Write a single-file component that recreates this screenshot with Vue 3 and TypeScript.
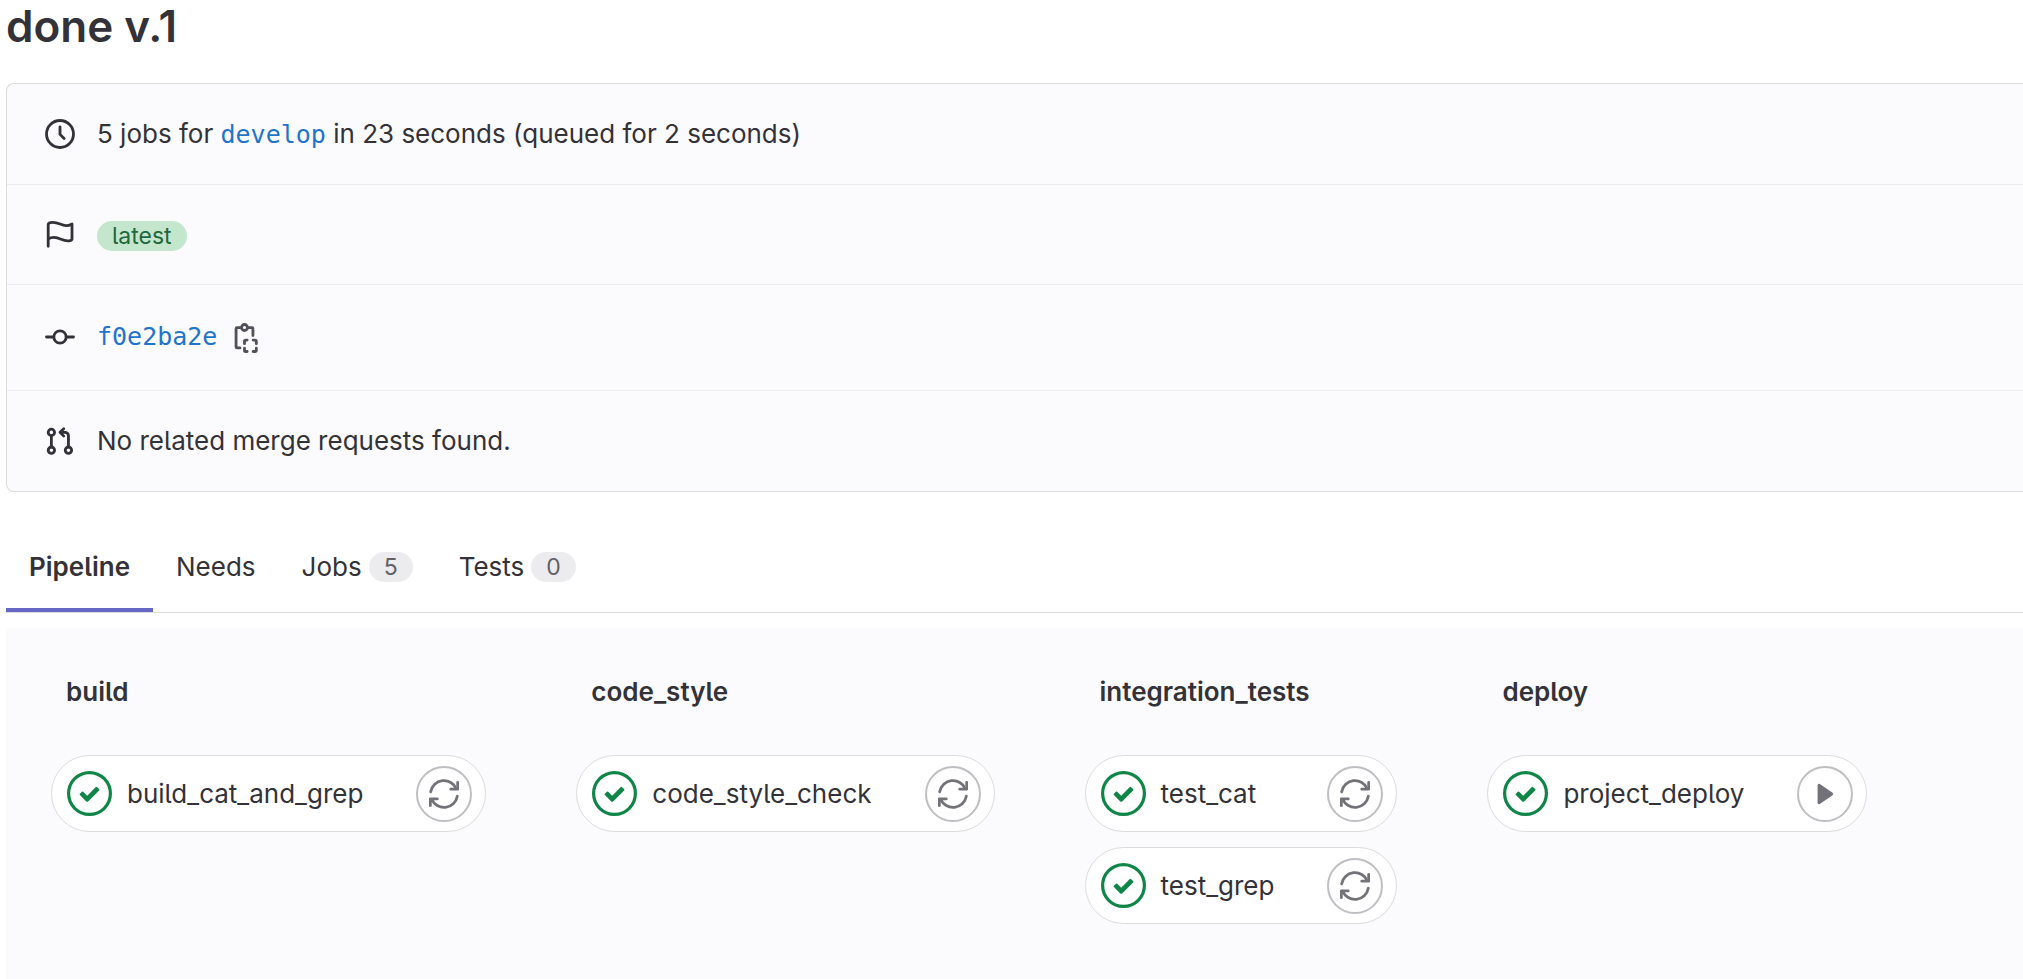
<script setup lang="ts">
type Action = 'retry' | 'play'

interface Job {
  name: string
  action: Action
}

interface Stage {
  name: string
  jobs: Job[]
}

interface Tab {
  label: string
  count?: number
}

const tabs: Tab[] = [
  { label: 'Pipeline' },
  { label: 'Needs' },
  { label: 'Jobs', count: 5 },
  { label: 'Tests', count: 0 },
]
const activeTab = 'Pipeline'

const stages: Stage[] = [
  { name: 'build', jobs: [{ name: 'build_cat_and_grep', action: 'retry' }] },
  { name: 'code_style', jobs: [{ name: 'code_style_check', action: 'retry' }] },
  {
    name: 'integration_tests',
    jobs: [
      { name: 'test_cat', action: 'retry' },
      { name: 'test_grep', action: 'retry' },
    ],
  },
  { name: 'deploy', jobs: [{ name: 'project_deploy', action: 'play' }] },
]
</script>

<template>
  <main class="page">
    <h1 class="title">done v.1</h1>

    <section class="info">
      <div class="row">
        <svg class="icon" viewBox="0 0 16 16" aria-hidden="true">
          <circle cx="8" cy="8" r="7.2" />
          <path d="M8 4.2v4l2.2 2.2" />
        </svg>
        <p class="text">
          5 jobs for <a class="mono" href="#develop">develop</a> in 23 seconds (queued for 2 seconds)
        </p>
      </div>
      <div class="row">
        <svg class="icon" viewBox="0 0 16 16" aria-hidden="true">
          <path d="M1.7 14V2.6Q1.7 1.7 2.9 1.4C6.6.6 8.4 3 11.2 3Q12.7 3 14.4 2.1V10Q14.4 10.8 13.5 11C9.6 11.9 8.4 9.3 4.8 9.3Q3.1 9.3 1.7 10.1" />
        </svg>
        <span class="badge success">latest</span>
      </div>
      <div class="row commit">
        <svg class="icon" viewBox="0 0 16 16" aria-hidden="true">
          <circle cx="8" cy="8" r="3.3" />
          <path d="M.8 8h3.9M11.3 8h3.9" />
        </svg>
        <a class="mono" href="#f0e2ba2e">f0e2ba2e</a>
        <button class="copy" type="button" aria-label="Copy commit SHA">
          <svg class="icon" viewBox="0 0 16 16" aria-hidden="true">
            <path d="M5.4 2.5H3.2a.5.5 0 0 0-.5.5v9.8a.5.5 0 0 0 .5.5h1.6M9.2 2.5h2a.5.5 0 0 1 .5.5v3.7" />
            <circle cx="7.2" cy="2.4" r="1.6" />
            <path d="M7.2 11v-1.3a.6.6 0 0 1 .6-.6H8.6M11.8 9.1h1.1a.6.6 0 0 1 .6.6V11M13.5 13.4v1.2a.6.6 0 0 1-.6.6h-1.1M8.6 15.2h-.8a.6.6 0 0 1-.6-.6v-1.2" />
          </svg>
        </button>
      </div>
      <div class="row">
        <svg class="icon" viewBox="0 0 16 16" aria-hidden="true">
          <circle cx="3.4" cy="3.4" r="1.7" />
          <circle cx="3.4" cy="12.9" r="1.7" />
          <circle cx="12.5" cy="12.9" r="1.7" />
          <path d="M3.4 5.2v6M12.5 11.1V5.2a1.8 1.8 0 0 0-1.8-1.8H8.2M10 1.5 8 3.4l2 2" />
        </svg>
        <p class="text">No related merge requests found.</p>
      </div>
    </section>

    <div class="tabs" role="tablist">
      <button
        v-for="tab in tabs"
        :key="tab.label"
        class="tab"
        :class="{ active: tab.label === activeTab }"
        type="button"
        role="tab"
        :aria-selected="tab.label === activeTab"
      >
        <span>{{ tab.label }}</span>
        <span v-if="tab.count !== undefined" class="badge muted">{{ tab.count }}</span>
      </button>
    </div>

    <section class="graph">
      <div v-for="stage in stages" :key="stage.name" class="stage">
        <h2 class="stage-name">{{ stage.name }}</h2>
        <ul class="jobs">
          <li v-for="job in stage.jobs" :key="job.name" class="job">
            <svg class="status" viewBox="0 0 14 14" aria-hidden="true">
              <circle cx="7" cy="7" r="6.5" />
              <path d="M6.278 7.697L5.045 6.464a.296.296 0 0 0-.42-.002l-.613.614a.298.298 0 0 0 .002.42l1.91 1.909a.5.5 0 0 0 .703.005l.265-.265L9.997 6.04a.291.291 0 0 0-.009-.408l-.614-.614a.29.29 0 0 0-.408-.009L6.278 7.697z" />
            </svg>
            <span class="job-name">{{ job.name }}</span>
            <button class="action" type="button" :aria-label="`${job.action} ${job.name}`">
              <svg v-if="job.action === 'retry'" class="icon" viewBox="0 0 16 16" aria-hidden="true">
                <path d="M.9 6.8A7.2 7.2 0 0 1 14.6 5.2M15.3 1.8v3.6h-3.7" />
                <path d="M15.1 9.2A7.2 7.2 0 0 1 1.4 10.8M.7 14.2v-3.6h3.7" />
              </svg>
              <svg v-else class="icon play" viewBox="0 0 16 16" aria-hidden="true">
                <path d="M4.8 3.3v9.4L11.6 8z" />
              </svg>
            </button>
          </li>
        </ul>
      </div>
    </section>
  </main>
</template>

<style>
body {
  background: #fff;
}
</style>

<style scoped>
.page {
  padding-left: 6px;
  overflow: hidden;
  color: #333238;
  font-family: Inter, "Noto Sans", sans-serif;
  font-size: 26px;
  font-weight: 400;
  font-feature-settings: "cv05";
  line-height: 36px;
}

.title {
  margin: 0 0 31px;
  font-size: 44px;
  line-height: 52px;
  font-weight: 600;
}

.info {
  border: 1px solid #dcdcde;
  border-right: 0;
  border-radius: 8px 0 0 8px;
  background: #fbfafd;
}

.row {
  box-sizing: border-box;
  display: flex;
  align-items: center;
  min-height: 100px;
  padding-left: 38px;
  gap: 22px;
}

.row + .row {
  border-top: 1px solid #ececef;
}

.row.commit {
  min-height: 106px;
  padding-bottom: 2px;
}

.row:last-child {
  min-height: 101px;
}

.text {
  margin: 0;
}

.icon {
  flex: none;
  display: block;
  width: 30px;
  height: 30px;
  fill: none;
  stroke: currentColor;
  stroke-width: 1.5;
  stroke-linecap: round;
  stroke-linejoin: round;
}

.mono {
  color: #1f75cb;
  font-family: "DejaVu Sans Mono", monospace;
  font-size: 25px;
  text-decoration: none;
}

.badge {
  padding: 0 15px;
  border-radius: 15px;
  font-size: 23px;
  line-height: 30px;
  font-weight: 400;
}

.success {
  margin-top: 2px;
  background: #c3e6cd;
  color: #24663b;
}

.muted {
  background: #ececef;
  color: #626168;
}

.copy {
  margin: 2px 0 0 -8px;
  padding: 0;
  border: 0;
  background: none;
  color: #535158;
}

.tabs {
  display: flex;
  height: 120px;
  border-bottom: 1px solid #dcdcde;
}

.tab {
  display: flex;
  align-items: center;
  gap: 7px;
  padding: 34px 23px 0;
  border: 0;
  border-bottom: 4px solid transparent;
  background: none;
  color: inherit;
  font: inherit;
  font-feature-settings: inherit;
}

.tab.active {
  border-color: #6666c4;
  font-weight: 600;
}

.graph {
  display: flex;
  gap: 90px;
  margin-top: 15px;
  padding: 46px 45px 55px;
  background: #fbfafd;
}

.stage-name {
  margin: 0 0 45px;
  padding-left: 15px;
  font-size: 26px;
  line-height: 36px;
  font-weight: 600;
}

.jobs {
  display: flex;
  flex-direction: column;
  gap: 15px;
  margin: 0;
  padding: 0;
  list-style: none;
}

.job {
  display: flex;
  align-items: center;
  height: 75px;
  padding: 0 13px 0 15px;
  border: 1px solid #dcdcde;
  border-radius: 39px;
  background: #fff;
}

.status {
  flex: none;
  width: 45px;
  height: 45px;
  margin-right: 15px;
  fill: #108548;
}

.status circle {
  fill: none;
  stroke: #108548;
}

.job-name {
  flex: 1;
  padding-right: 53px;
  white-space: nowrap;
}

.action {
  flex: none;
  display: grid;
  place-items: center;
  width: 56px;
  height: 56px;
  padding: 0;
  border: 2px solid #bfbfc3;
  border-radius: 50%;
  background: #fff;
  color: #737278;
}

.play {
  fill: currentColor;
}
</style>
